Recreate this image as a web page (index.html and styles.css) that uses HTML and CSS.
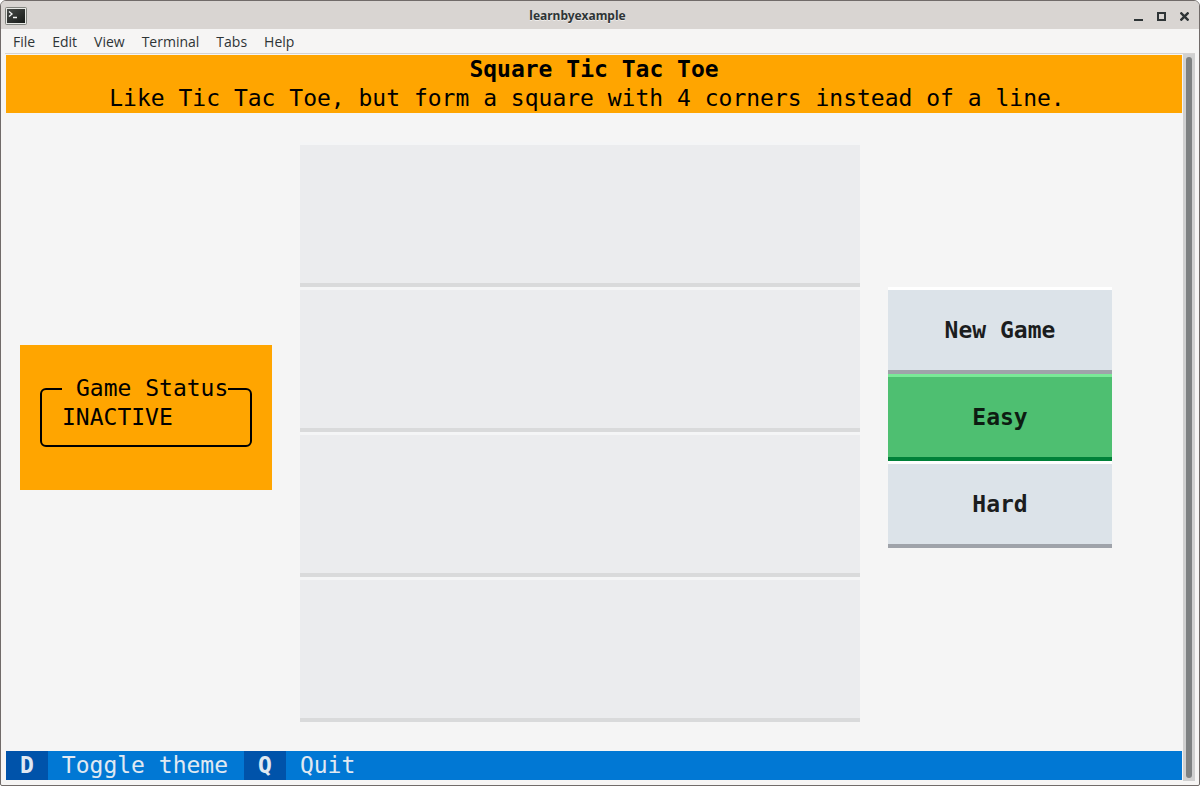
FILE: index.html
```html
<!DOCTYPE html>
<html lang="en">
<head>
<meta charset="utf-8">
<title>learnbyexample</title>
<link rel="stylesheet" href="styles.css">
</head>
<body>
<div class="window">
  <header class="titlebar">
    <svg class="app-icon" width="22" height="18" viewBox="0 0 22 18" aria-hidden="true">
      <defs><linearGradient id="screen" x1="0" y1="0" x2="1" y2="1"><stop offset="0" stop-color="#484b48"/><stop offset="1" stop-color="#171a18"/></linearGradient></defs>
      <rect x=".5" y=".5" width="21" height="17" rx="1" fill="#e8e9e5" stroke="#80827d"/>
      <rect x="2" y="2" width="18" height="14" fill="url(#screen)"/>
      <path d="M4 4.500l3 2.500-3 2.500M8 10.500h4" fill="none" stroke="#f4f4f4" stroke-width="1.300"/>
    </svg>
    <h1 class="window-title">learnbyexample</h1>
    <div class="controls">
      <button type="button" class="control" aria-label="Minimize"><svg width="9" height="9" viewBox="0 0 9 9"><path d="M0 7h9v2H0z" fill="#2e3436"/></svg></button>
      <button type="button" class="control" aria-label="Maximize"><svg width="9" height="9" viewBox="0 0 9 9"><path d="M1 1h7v7H1z" fill="none" stroke="#2e3436" stroke-width="2"/></svg></button>
      <button type="button" class="control" aria-label="Close"><svg width="9" height="9" viewBox="0 0 9 9"><path d="M.5.5l8 8M8.500.5l-8 8" fill="none" stroke="#2e3436" stroke-width="2.400"/></svg></button>
    </div>
  </header>
  <nav class="menubar">
    <button type="button" class="menu">File</button>
    <button type="button" class="menu">Edit</button>
    <button type="button" class="menu">View</button>
    <button type="button" class="menu">Terminal</button>
    <button type="button" class="menu">Tabs</button>
    <button type="button" class="menu">Help</button>
  </nav>
  <div class="body">
    <div class="terminal">
      <header class="banner">
        <h2 class="banner-title">Square Tic Tac Toe</h2>
        <p class="banner-text">Like Tic Tac Toe, but form a square with 4 corners instead of a line.</p>
      </header>
      <main class="game">
        <section class="status">
          <fieldset class="status-box">
            <legend class="status-legend">Game Status</legend>
            <output class="status-value">INACTIVE</output>
          </fieldset>
        </section>
        <div class="board">
          <button type="button" class="cell" aria-label="Row 1, column 1"></button>
          <button type="button" class="cell" aria-label="Row 1, column 2"></button>
          <button type="button" class="cell" aria-label="Row 1, column 3"></button>
          <button type="button" class="cell" aria-label="Row 1, column 4"></button>
          <button type="button" class="cell" aria-label="Row 2, column 1"></button>
          <button type="button" class="cell" aria-label="Row 2, column 2"></button>
          <button type="button" class="cell" aria-label="Row 2, column 3"></button>
          <button type="button" class="cell" aria-label="Row 2, column 4"></button>
          <button type="button" class="cell" aria-label="Row 3, column 1"></button>
          <button type="button" class="cell" aria-label="Row 3, column 2"></button>
          <button type="button" class="cell" aria-label="Row 3, column 3"></button>
          <button type="button" class="cell" aria-label="Row 3, column 4"></button>
          <button type="button" class="cell" aria-label="Row 4, column 1"></button>
          <button type="button" class="cell" aria-label="Row 4, column 2"></button>
          <button type="button" class="cell" aria-label="Row 4, column 3"></button>
          <button type="button" class="cell" aria-label="Row 4, column 4"></button>
        </div>
        <div class="actions">
          <button type="button" class="action">New Game</button>
          <button type="button" class="action action-active">Easy</button>
          <button type="button" class="action">Hard</button>
        </div>
      </main>
      <footer class="keys">
        <button type="button" class="key"><kbd class="key-cap">D</kbd><span class="key-label">Toggle theme</span></button>
        <button type="button" class="key"><kbd class="key-cap">Q</kbd><span class="key-label">Quit</span></button>
      </footer>
    </div>
    <div class="scrollbar"><div class="thumb"></div></div>
  </div>
</div>
</body>
</html>
```
FILE: styles.css
```css
* { box-sizing: border-box; }

body {
  margin: 0;
  background: #fff;
}

button {
  margin: 0;
  padding: 0;
  border: 0;
  background: none;
  color: inherit;
  font: inherit;
}

.window {
  display: flex;
  flex-direction: column;
  min-height: 100vh;
  border: 1px solid #716b69;
  border-radius: 6px 6px 2px 2px;
  background: #f6f5f4;
  overflow: hidden;
}

.titlebar {
  display: flex;
  align-items: center;
  height: 28px;
  padding: 2px 10px 0 4px;
  background: #d9d5d2;
  color: #2e3436;
}

.app-icon { display: block; }

.window-title {
  flex: 1;
  margin: 0;
  padding-right: 6px;
  font: bold 12px/24px "Noto Sans", sans-serif;
  text-align: center;
  text-shadow: 0 1px #efedeb;
}

.controls {
  display: flex;
  gap: 14px;
}

.control svg { display: block; }

.menubar {
  display: flex;
  gap: 17px;
  height: 25px;
  margin: 0 4px;
  padding: 1px 8px 0;
  border-bottom: 1px solid #d5d3d1;
  color: #2e3436;
  font: 14px/24px "Open Sans", sans-serif;
}

.body {
  display: flex;
  flex: 1;
  padding: 0 4px 4px 5px;
}

.terminal {
  display: flex;
  flex: 1;
  flex-direction: column;
  margin: 1px 1px 1px 0;
  background: #f5f5f5;
  color: #000;
  font: 23px/29px "DejaVu Sans Mono", monospace;
}

.banner {
  background: #ffa500;
  text-align: center;
}

.banner-title {
  margin: 0;
  font: inherit;
  font-weight: bold;
}

.banner-text {
  margin: 0;
  padding-right: 14px;
}

.game {
  display: grid;
  flex: 1;
  grid-template-columns: minmax(0, 252fr) minmax(0, 560fr) minmax(0, 224fr);
  gap: 28px;
  align-items: center;
  padding: 0 70px 0 14px;
}

.status {
  margin-bottom: 29px;
  padding: 29px 20px 43px;
  background: #ffa500;
}

.status-box {
  min-width: 0;
  margin: 0;
  padding: 0 20px 13px;
  border: 2px solid #000;
  border-radius: 6px;
}

.status-legend { padding: 0 0 0 14px; }

.status-value { display: block; }

.board {
  display: grid;
  grid-template-columns: repeat(4, 1fr);
  grid-auto-rows: 145px;
}

.cell {
  border-top: 3px solid #f4f5f6;
  border-bottom: 4px solid #d9dadb;
  background: #ebecee;
}

.actions {
  display: flex;
  flex-direction: column;
  margin-bottom: 29px;
}

.action {
  padding: 26px 0 25px;
  border-top: 3px solid #fff;
  border-bottom: 4px solid #9fa3aa;
  background: #dce3e9;
  color: #1b1d1e;
  font-weight: bold;
}

.action-active {
  border-top-color: #7ae998;
  border-bottom-color: #008139;
  background: #4ebf71;
  color: #0d1c12;
}

.keys {
  display: flex;
  background: #0178d4;
  color: #e0e9f2;
}

.key { display: flex; }

.key-cap {
  padding: 0 14px;
  background: #0053aa;
  font: inherit;
  font-weight: bold;
}

.key-label { padding: 0 16px 0 14px; }

.scrollbar {
  display: flex;
  width: 12px;
  padding: 3px;
  background: #d0d0d0;
}

.thumb {
  flex: 1;
  border-radius: 3px;
  background: #7e8182;
}
```
